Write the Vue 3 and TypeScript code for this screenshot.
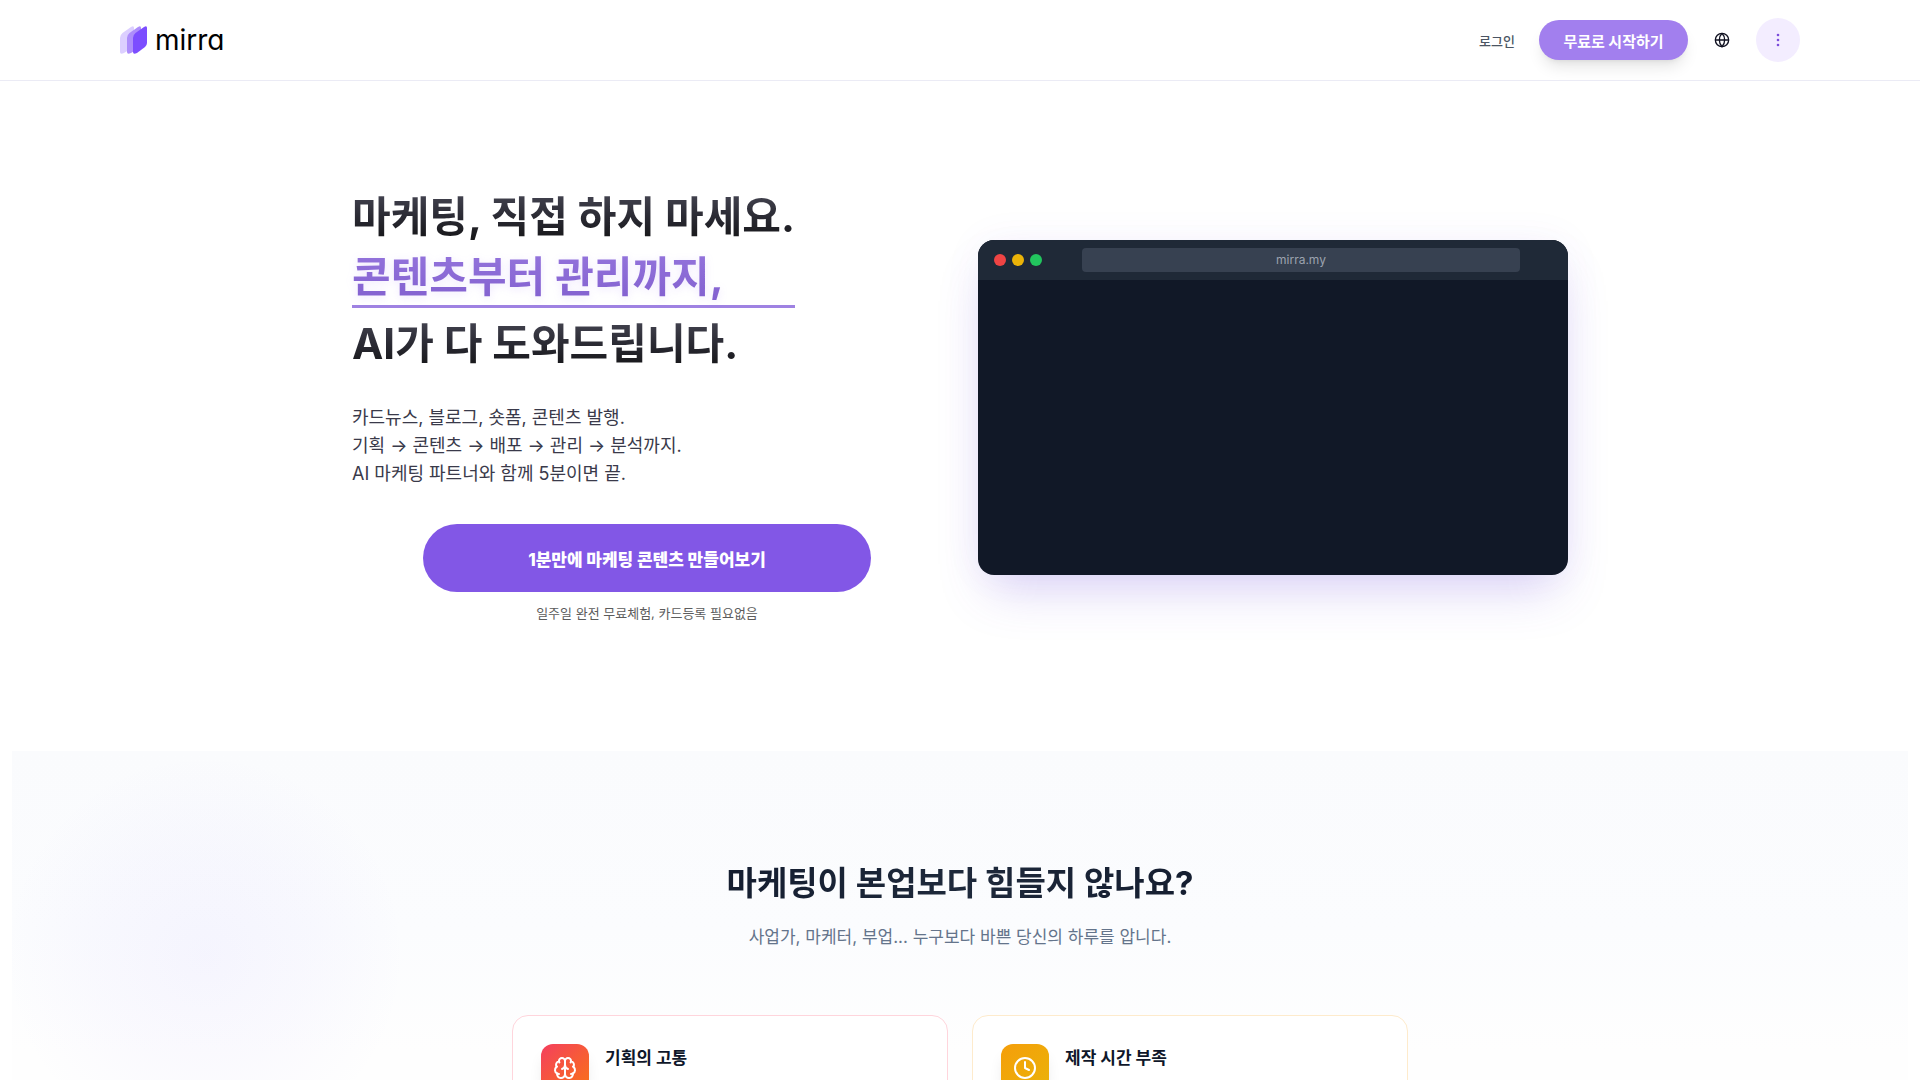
<script setup lang="ts">
interface PainPoint {
  title: string
  tone: 'rose' | 'amber'
  icon: string[]
}

const copyLines: string[] = [
  '카드뉴스, 블로그, 숏폼, 콘텐츠 발행.',
  '기획 → 콘텐츠 → 배포 → 관리 → 분석까지.',
  'AI 마케팅 파트너와 함께 5분이면 끝.',
]

const painPoints: PainPoint[] = [
  {
    title: '기획의 고통',
    tone: 'rose',
    icon: [
      'M12 5a3 3 0 1 0-5.997.125 4 4 0 0 0-2.526 5.77 4 4 0 0 0 .556 6.588A4 4 0 1 0 12 18Z',
      'M12 5a3 3 0 1 1 5.997.125 4 4 0 0 1 2.526 5.77 4 4 0 0 1-.556 6.588A4 4 0 1 1 12 18Z',
      'M15 13a4.5 4.5 0 0 1-3-4 4.5 4.5 0 0 1-3 4',
      'M17.599 6.5a3 3 0 0 0 .399-1.375',
      'M6.003 5.125A3 3 0 0 0 6.401 6.5',
      'M3.477 10.896a4 4 0 0 1 .585-.396',
      'M19.938 10.5a4 4 0 0 1 .585.396',
      'M6 18a4 4 0 0 1-1.967-.516',
      'M19.967 17.484A4 4 0 0 1 18 18',
    ],
  },
  {
    title: '제작 시간 부족',
    tone: 'amber',
    icon: ['M12 2a10 10 0 1 0 0 20 10 10 0 0 0 0-20Z', 'M12 6v6l4 2'],
  },
]
</script>

<template>
  <div class="page">
    <header class="topbar">
      <a class="brand" href="#">
        <svg class="brand-mark" viewBox="0 0 27 28" aria-hidden="true">
          <path fill="#dccfff" d="M0 12Q0 9 2.500 7L11 1Q14-1 14 2V18Q14 20 12 22L4 27Q0 29 0 26Z" />
          <path fill="#ad8dfb" d="M7 12Q7 9 9.500 7L18 1Q21-1 21 2V18Q21 20 19 22L11 27Q7 29 7 26Z" />
          <path fill="#7c4dff" d="M13 12Q13 9 15.500 7L24 1Q27-1 27 2V17Q27 19 25 21L17 27Q13 29 13 26Z" />
        </svg>
        <span class="brand-name">mirra</span>
      </a>
      <nav class="nav">
        <a class="login" href="#">로그인</a>
        <button class="start" type="button">무료로 시작하기</button>
        <button class="lang" type="button" aria-label="언어">
          <svg viewBox="0 0 24 24" aria-hidden="true">
            <circle cx="12" cy="12" r="10" />
            <path d="M12 2a14.500 14.500 0 0 0 0 20 14.500 14.500 0 0 0 0-20M2 12h20" />
          </svg>
        </button>
        <button class="more" type="button" aria-label="메뉴">
          <svg viewBox="0 0 16 16" aria-hidden="true">
            <circle cx="8" cy="3" r="1.300" />
            <circle cx="8" cy="8" r="1.300" />
            <circle cx="8" cy="13" r="1.300" />
          </svg>
        </button>
      </nav>
    </header>

    <main>
      <section class="hero">
        <div class="intro">
          <h1 class="headline">
            <span class="dark">마케팅, 직접 하지 마세요.</span>
            <span class="accent"><span class="accent-text">콘텐츠부터 관리까지,</span></span>
            <span class="dark">AI가 다 도와드립니다.</span>
          </h1>
          <p class="copy">
            <span v-for="line in copyLines" :key="line">{{ line }}</span>
          </p>
          <div class="action">
            <button class="cta" type="button">1분만에 마케팅 콘텐츠 만들어보기</button>
            <p class="note">일주일 완전 무료체험, 카드등록 필요없음</p>
          </div>
        </div>

        <div class="browser">
          <div class="browser-bar">
            <i class="dot red"></i>
            <i class="dot yellow"></i>
            <i class="dot green"></i>
            <span class="url">mirra.my</span>
          </div>
          <div class="screen"></div>
        </div>
      </section>

      <section class="pains">
        <h2 class="pains-title">마케팅이 본업보다 힘들지 않나요?</h2>
        <p class="pains-sub">사업가, 마케터, 부업... 누구보다 바쁜 당신의 하루를 압니다.</p>
        <div class="cards">
          <article v-for="item in painPoints" :key="item.title" class="card" :class="item.tone">
            <span class="badge">
              <svg viewBox="0 0 24 24" aria-hidden="true">
                <path v-for="d in item.icon" :key="d" :d="d" />
              </svg>
            </span>
            <h3>{{ item.title }}</h3>
          </article>
        </div>
      </section>
    </main>
  </div>
</template>

<style>
body {
  margin: 0;
  background: #fff;
}
</style>

<style scoped>
.page {
  height: 100vh;
  overflow: hidden;
  font-family: Inter, "Noto Sans CJK KR", sans-serif;
  color: #0f172a;
}

h1,
h2,
h3,
p {
  margin: 0;
}

button {
  border: 0;
  padding: 0;
  font-family: inherit;
  cursor: pointer;
}

a {
  color: inherit;
  text-decoration: none;
}

.topbar {
  display: flex;
  align-items: center;
  justify-content: space-between;
  height: 80px;
  padding: 0 120px;
  border-bottom: 1px solid #ebebf5;
}

.brand {
  display: flex;
  align-items: center;
  gap: 8px;
}

.brand-mark {
  width: 27px;
  height: 28px;
}

.brand-name {
  font-size: 28px;
  line-height: 36px;
  color: #000;
  font-feature-settings: "cv11";
}

.nav {
  display: flex;
  align-items: center;
  gap: 12px;
}

.login {
  margin-right: 12px;
  font-size: 13px;
  font-weight: 500;
  color: #4b5563;
}

.start {
  width: 149px;
  height: 40px;
  border-radius: 20px;
  background: #a27fee;
  color: #fff;
  font-size: 15px;
  font-weight: 700;
  box-shadow: 0 10px 15px -3px rgba(0, 0, 0, 0.1), 0 4px 6px -4px rgba(0, 0, 0, 0.1);
}

.lang,
.more {
  display: grid;
  place-items: center;
  width: 44px;
  height: 44px;
  border-radius: 50%;
  background: none;
}

.lang svg {
  width: 16px;
  height: 16px;
  fill: none;
  stroke: #0f1020;
  stroke-width: 2;
}

.more {
  background: #f3edff;
}

.more svg {
  width: 16px;
  height: 16px;
  fill: #7c4ddb;
}

.hero {
  display: grid;
  grid-template-columns: 1fr 1fr;
  gap: 36px;
  align-items: center;
  max-width: 1216px;
  margin: 0 auto;
  padding: 106px 24px 124px;
}

.headline {
  display: flex;
  flex-direction: column;
  width: fit-content;
  font-size: 42px;
  font-weight: 700;
  line-height: 60px;
}

.dark {
  background: linear-gradient(#41414d 15%, #2a2a33 50%, #18181b 85%);
  background-clip: text;
  color: transparent;
}

.accent {
  height: 61px;
  margin-bottom: 6px;
  border-bottom: 3px solid #9f82e2;
  box-sizing: border-box;
  line-height: 60px;
}

.accent-text {
  background: linear-gradient(#9474dc, #8260cf);
  background-clip: text;
  color: transparent;
  filter: drop-shadow(0 2px 4px rgba(139, 92, 246, 0.15));
}

.copy {
  display: flex;
  flex-direction: column;
  margin-top: 30px;
  font-size: 18px;
  line-height: 28px;
  color: #3a3a4a;
}

.action {
  display: flex;
  flex-direction: column;
  align-items: center;
  margin-top: 36px;
  padding-bottom: 4px;
}

.cta {
  width: 100%;
  max-width: 448px;
  height: 68px;
  border-radius: 34px;
  background: #8257e6;
  color: #fff;
  font-size: 17px;
  font-weight: 800;
}

.note {
  margin-top: 11px;
  font-size: 13px;
  line-height: 20px;
  color: #5c5c5c;
}

.browser {
  overflow: hidden;
  border-radius: 16px;
  background: #111827;
  box-shadow: 0 25px 50px -12px rgba(109, 77, 219, 0.25), 0 0 40px rgba(109, 77, 219, 0.05);
}

.browser-bar {
  display: flex;
  align-items: center;
  gap: 6px;
  height: 40px;
  padding: 0 48px 0 16px;
  background: #1f2937;
}

.dot {
  width: 12px;
  height: 12px;
  border-radius: 50%;
}

.red {
  background: #ef4444;
}

.yellow {
  background: #eab308;
}

.green {
  background: #22c55e;
}

.url {
  flex: 1;
  margin-left: 34px;
  border-radius: 4px;
  background: #374151;
  color: #9ca3af;
  font-size: 12px;
  line-height: 24px;
  text-align: center;
}

.screen {
  aspect-ratio: 2 / 1;
}

.pains {
  margin: 0 12px;
  padding: 108px 24px 112px;
  background:
    radial-gradient(circle at 193px 204px, rgba(139, 120, 255, 0.06), rgba(139, 120, 255, 0.03) 110px, transparent 200px),
    linear-gradient(#fafbfd, #fbfcfe 180px, #fefefe 300px);
  text-align: center;
}

.pains-title {
  font-size: 33px;
  font-weight: 700;
  line-height: 48px;
  background: linear-gradient(90deg, #0f172a 30%, #1e293b 50%, #0f172a 70%);
  background-clip: text;
  color: transparent;
}

.pains-sub {
  margin-top: 16px;
  font-size: 17px;
  line-height: 28px;
  color: #64748b;
}

.cards {
  display: grid;
  grid-template-columns: 1fr 1fr;
  gap: 24px;
  max-width: 896px;
  margin: 64px auto 0;
}

.card {
  display: flex;
  gap: 16px;
  min-height: 120px;
  padding: 28px;
  border: 1px solid #ffd5dc;
  border-radius: 16px;
  background: #fff;
}

.card.amber {
  border-color: #feebcc;
}

.badge {
  display: grid;
  place-items: center;
  width: 48px;
  height: 48px;
  border-radius: 12px;
  background: linear-gradient(135deg, #f43f5e, #f97316);
  box-shadow: 0 10px 15px -3px rgba(0, 0, 0, 0.1);
}

.amber .badge {
  background: linear-gradient(135deg, #f59e0b, #eab308);
}

.badge svg {
  width: 24px;
  height: 24px;
  fill: none;
  stroke: #fff;
  stroke-width: 2;
  stroke-linecap: round;
  stroke-linejoin: round;
}

.card h3 {
  font-size: 17px;
  font-weight: 700;
  line-height: 28px;
}
</style>
